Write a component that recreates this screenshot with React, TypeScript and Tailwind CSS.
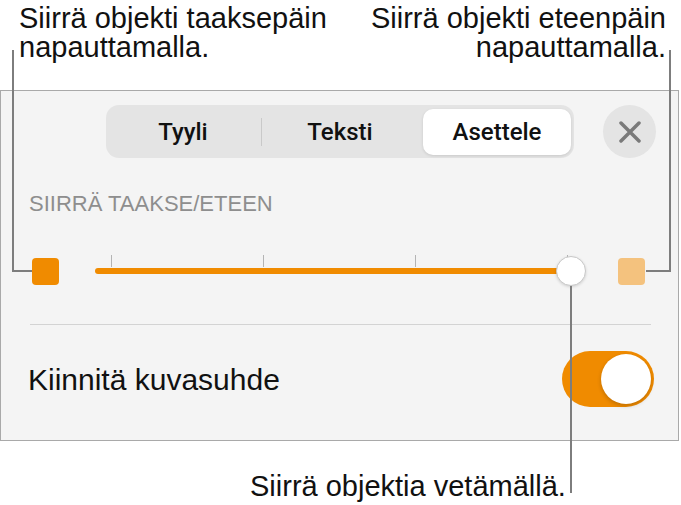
import React from 'react';

const orange = 'bg-[#f08b00]';

function Segmented() {
  const tabs = ['Tyyli', 'Teksti', 'Asettele'];
  return (
    <div className="flex h-[53px] w-[468px] items-center rounded-[13px] bg-[#e4e4e4] px-[3px]">
      {tabs.map((t, i) => (
        <React.Fragment key={t}>
          {i > 0 && (
            <div className="flex w-[9px] justify-center">
              {i === 1 && <div className="h-[28px] w-px bg-[#c9c9c9]" />}
            </div>
          )}
          <div
            className={
              'flex h-[46px] w-[148px] items-center justify-center rounded-[10px] font-["Roboto",sans-serif] text-[24px] font-medium text-[#111] ' +
              (t === 'Asettele' ? 'bg-white shadow-[0_1px_3px_rgba(0,0,0,0.12)]' : '')
            }
          >
            {t}
          </div>
        </React.Fragment>
      ))}
    </div>
  );
}

function CloseButton() {
  return (
    <div className="flex h-[53px] w-[53px] items-center justify-center rounded-full bg-[#e4e4e4]">
      <svg width="22" height="22" viewBox="0 0 22 22">
        <path d="M2 2 L20 20 M20 2 L2 20" stroke="#7a7a7a" strokeWidth="3.5" strokeLinecap="round" />
      </svg>
    </div>
  );
}

function Slider() {
  const ticks = [16, 168, 320, 472];
  return (
    <div className="relative ml-[36px] h-[32px] w-[491px]">
      {ticks.map((x) => (
        <div key={x} className="absolute top-0 h-[12px] w-px bg-[#b4b4b4]" style={{ left: x }} />
      ))}
      <div className={`absolute left-0 right-[15px] top-[13px] h-[6px] rounded-full ${orange}`} />
      <div className="absolute right-0 top-px h-[30px] w-[30px] rounded-full border border-[#c8c8c8] bg-white shadow-[0_1px_3px_rgba(0,0,0,0.15)]" />
    </div>
  );
}

export default function App() {
  return (
    <div className="relative h-[505px] w-[681px] overflow-hidden bg-white font-['Liberation_Sans',Arial,sans-serif] text-[#111]">
      {/* callout texts */}
      <div className="flex h-[90px] justify-between pl-[19px] pr-[15px] pt-[4px] text-[29px] leading-[29px]">
        <p>
          Siirrä objekti taaksepäin
          <br />
          napauttamalla.
        </p>
        <p className="text-right">
          Siirrä objekti eteenpäin
          <br />
          napauttamalla.
        </p>
      </div>

      {/* panel */}
      <div className="box-border flex h-[351px] w-[679px] flex-col border border-[#a9a9a9] bg-[#f4f4f4]">
        <div className="flex justify-end gap-[29px] pr-[22px] pt-[14px]">
          <Segmented />
          <CloseButton />
        </div>

        <div className="mt-[35px] pl-[28px] text-[22px] leading-[22px] text-[#8e8e8e]">SIIRRÄ TAAKSE/ETEEN</div>

        <div className="mt-[40px] flex items-center pl-[31px]">
          <div className={`h-[27px] w-[27px] rounded-[4px] ${orange}`} />
          <Slider />
          <div className="ml-[32px] h-[27px] w-[27px] rounded-[4px] bg-[#f4c27e]" />
        </div>

        <div className="ml-[29px] mr-[27px] mt-[37px] h-px bg-[#d3d3d3]" />

        <div className="mt-[26px] flex items-center justify-between pl-[27px] pr-[24px]">
          <span className="mt-[2px] text-[30px] leading-[36px]">Kiinnitä kuvasuhde</span>
          <div className={`flex h-[56px] w-[92px] items-center justify-end rounded-full px-[3px] ${orange}`}>
            <div className="h-[50px] w-[50px] rounded-full bg-white shadow-[0_2px_4px_rgba(0,0,0,0.2)]" />
          </div>
        </div>
      </div>

      <p className="mt-[31px] pl-[250px] text-[29px] leading-[29px]">Siirrä objektia vetämällä.</p>

      {/* callout lines */}
      <div className="absolute left-[12px] top-[50px] h-[222px] w-[2px] bg-[#7d7d7d]" />
      <div className="absolute left-[12px] top-[270px] h-[2px] w-[20px] bg-[#7d7d7d]" />
      <div className="absolute left-[669px] top-[50px] h-[222px] w-[2px] bg-[#7d7d7d]" />
      <div className="absolute left-[646px] top-[270px] h-[2px] w-[25px] bg-[#7d7d7d]" />
      <div className="absolute left-[570px] top-[286px] h-[207px] w-[2px] bg-[#7d7d7d]" />
    </div>
  );
}
